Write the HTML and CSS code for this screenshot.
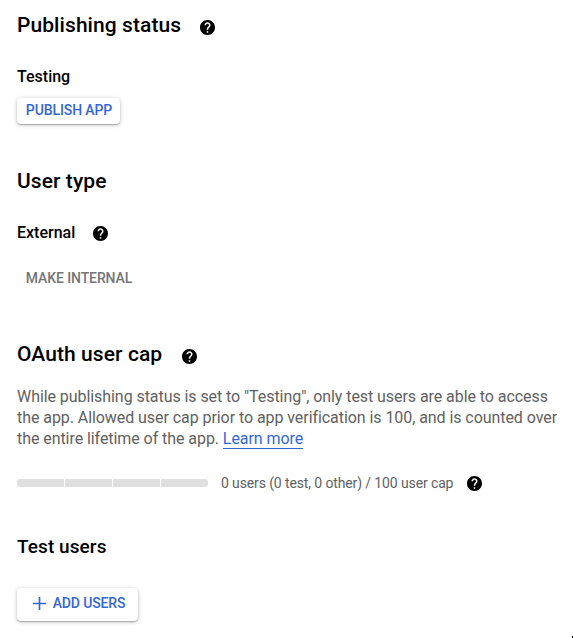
FILE: index.html
```html
<!DOCTYPE html>
<html lang="en">
<head>
<meta charset="utf-8">
<title>OAuth consent screen</title>
<link rel="stylesheet" href="styles.css">
</head>
<body>
<svg class="defs" width="0" height="0"><symbol id="help" viewBox="2 2 20 20"><path d="M12 2C6.480 2 2 6.480 2 12s4.480 10 10 10 10-4.480 10-10S17.520 2 12 2zm1 17h-2v-2h2v2zm2.070-7.750l-.9.920C13.450 12.900 13 13.500 13 15h-2v-.5c0-1.100.450-2.100 1.170-2.830l1.240-1.260c.370-.360.590-.860.590-1.410 0-1.100-.9-2-2-2s-2 .9-2 2H8c0-2.210 1.790-4 4-4s4 1.790 4 4c0 .880-.360 1.680-.930 2.250z"/></symbol></svg>
<main>
<section class="publishing">
<h2>Publishing status <svg class="help"><use href="#help"/></svg></h2>
<h3>Testing</h3>
<button class="raised publish">PUBLISH APP</button>
</section>
<section class="type">
<h2>User type</h2>
<h3>External <svg class="help"><use href="#help"/></svg></h3>
<button class="internal">MAKE INTERNAL</button>
</section>
<section class="cap">
<h2>OAuth user cap <svg class="help"><use href="#help"/></svg></h2>
<p>While publishing status is set to "Testing", only test users are able to access<br>the app. Allowed user cap prior to app verification is 100, and is counted over<br>the entire lifetime of the app. <a href="#">Learn more</a></p>
<div class="usage"><div class="meter"><i></i><i></i><i></i><i></i></div><span>0 users (0 test, 0 other) / 100 user cap</span><svg class="help"><use href="#help"/></svg></div>
</section>
<section class="test">
<h2>Test users</h2>
<button class="raised add"><svg class="plus" viewBox="0 0 13 13"><path d="M6.500 0v13M0 6.500h13"/></svg><span>ADD USERS</span></button>
</section>
</main>
<div class="corner"></div>
</body>
</html>
```
FILE: styles.css
```css
* { box-sizing: border-box; }
body { margin: 0; background: #fff; color: #000; font-family: Roboto, sans-serif; }
.defs { display: none; }
main { height: 638px; padding: 11px 0 0 17px; overflow: hidden; }
h2, h3 { display: flex; align-items: center; margin: 0; font-weight: 500; white-space: nowrap; }
h2 { height: 28px; font-size: 21px; letter-spacing: .08px; }
h3 { height: 24px; font-size: 16px; }
.help { width: 15px; height: 15px; flex: none; margin-left: 18px; }
h2 .help { position: relative; top: 2px; margin-left: 19px; }
button { display: flex; align-items: center; justify-content: center; border: 0; padding: 0; background: #fff; border-radius: 4px; font: 500 14px Roboto, sans-serif; letter-spacing: -.1px; white-space: nowrap; }
.raised { color: #3367d6; box-shadow: 0 1px 1px rgba(0,0,0,.22), 0 1px 4px rgba(0,0,0,.25); }
.publishing { height: 156px; }
.publishing h3 { margin-top: 25px; }
.publish { width: 103px; height: 26px; margin-top: 10px; padding: 0 0 2px 1px; }
.type { height: 173px; }
.type h3 { margin-top: 25px; }
.type .help { position: relative; top: 1px; }
.internal { width: 123px; height: 26px; margin-top: 21px; padding-left: 1px; color: #757575; }
.cap { height: 193px; }
.cap h2 .help { margin-left: 20px; }
p { margin: 18px 0 0; color: #616161; font-size: 16px; line-height: 21px; letter-spacing: -.065px; white-space: nowrap; }
a { color: #3367d6; text-decoration: none; border-bottom: 1px solid #3367d6; }
.usage { display: flex; align-items: center; height: 20px; margin-top: 24px; color: #616161; font-size: 14px; letter-spacing: -.12px; }
.meter { display: flex; gap: 1px; width: 191px; height: 8px; margin-right: 13px; border-radius: 3px; overflow: hidden; }
.meter i { flex: 1; background: #e0e0e0; }
.usage .help { margin-left: 14px; color: #000; }
.test h2 { height: 26px; font-size: 19px; }
.add { width: 121px; height: 33px; margin-top: 29px; padding: 0 0 2px 3px; letter-spacing: -.15px; }
.add span { margin-bottom: 1px; }
.plus { width: 13px; height: 13px; margin-right: 7px; fill: none; stroke: currentColor; stroke-width: 1.7; }
.corner { position: absolute; right: 0; bottom: 0; width: 1px; height: 2px; background: #000; }
```
